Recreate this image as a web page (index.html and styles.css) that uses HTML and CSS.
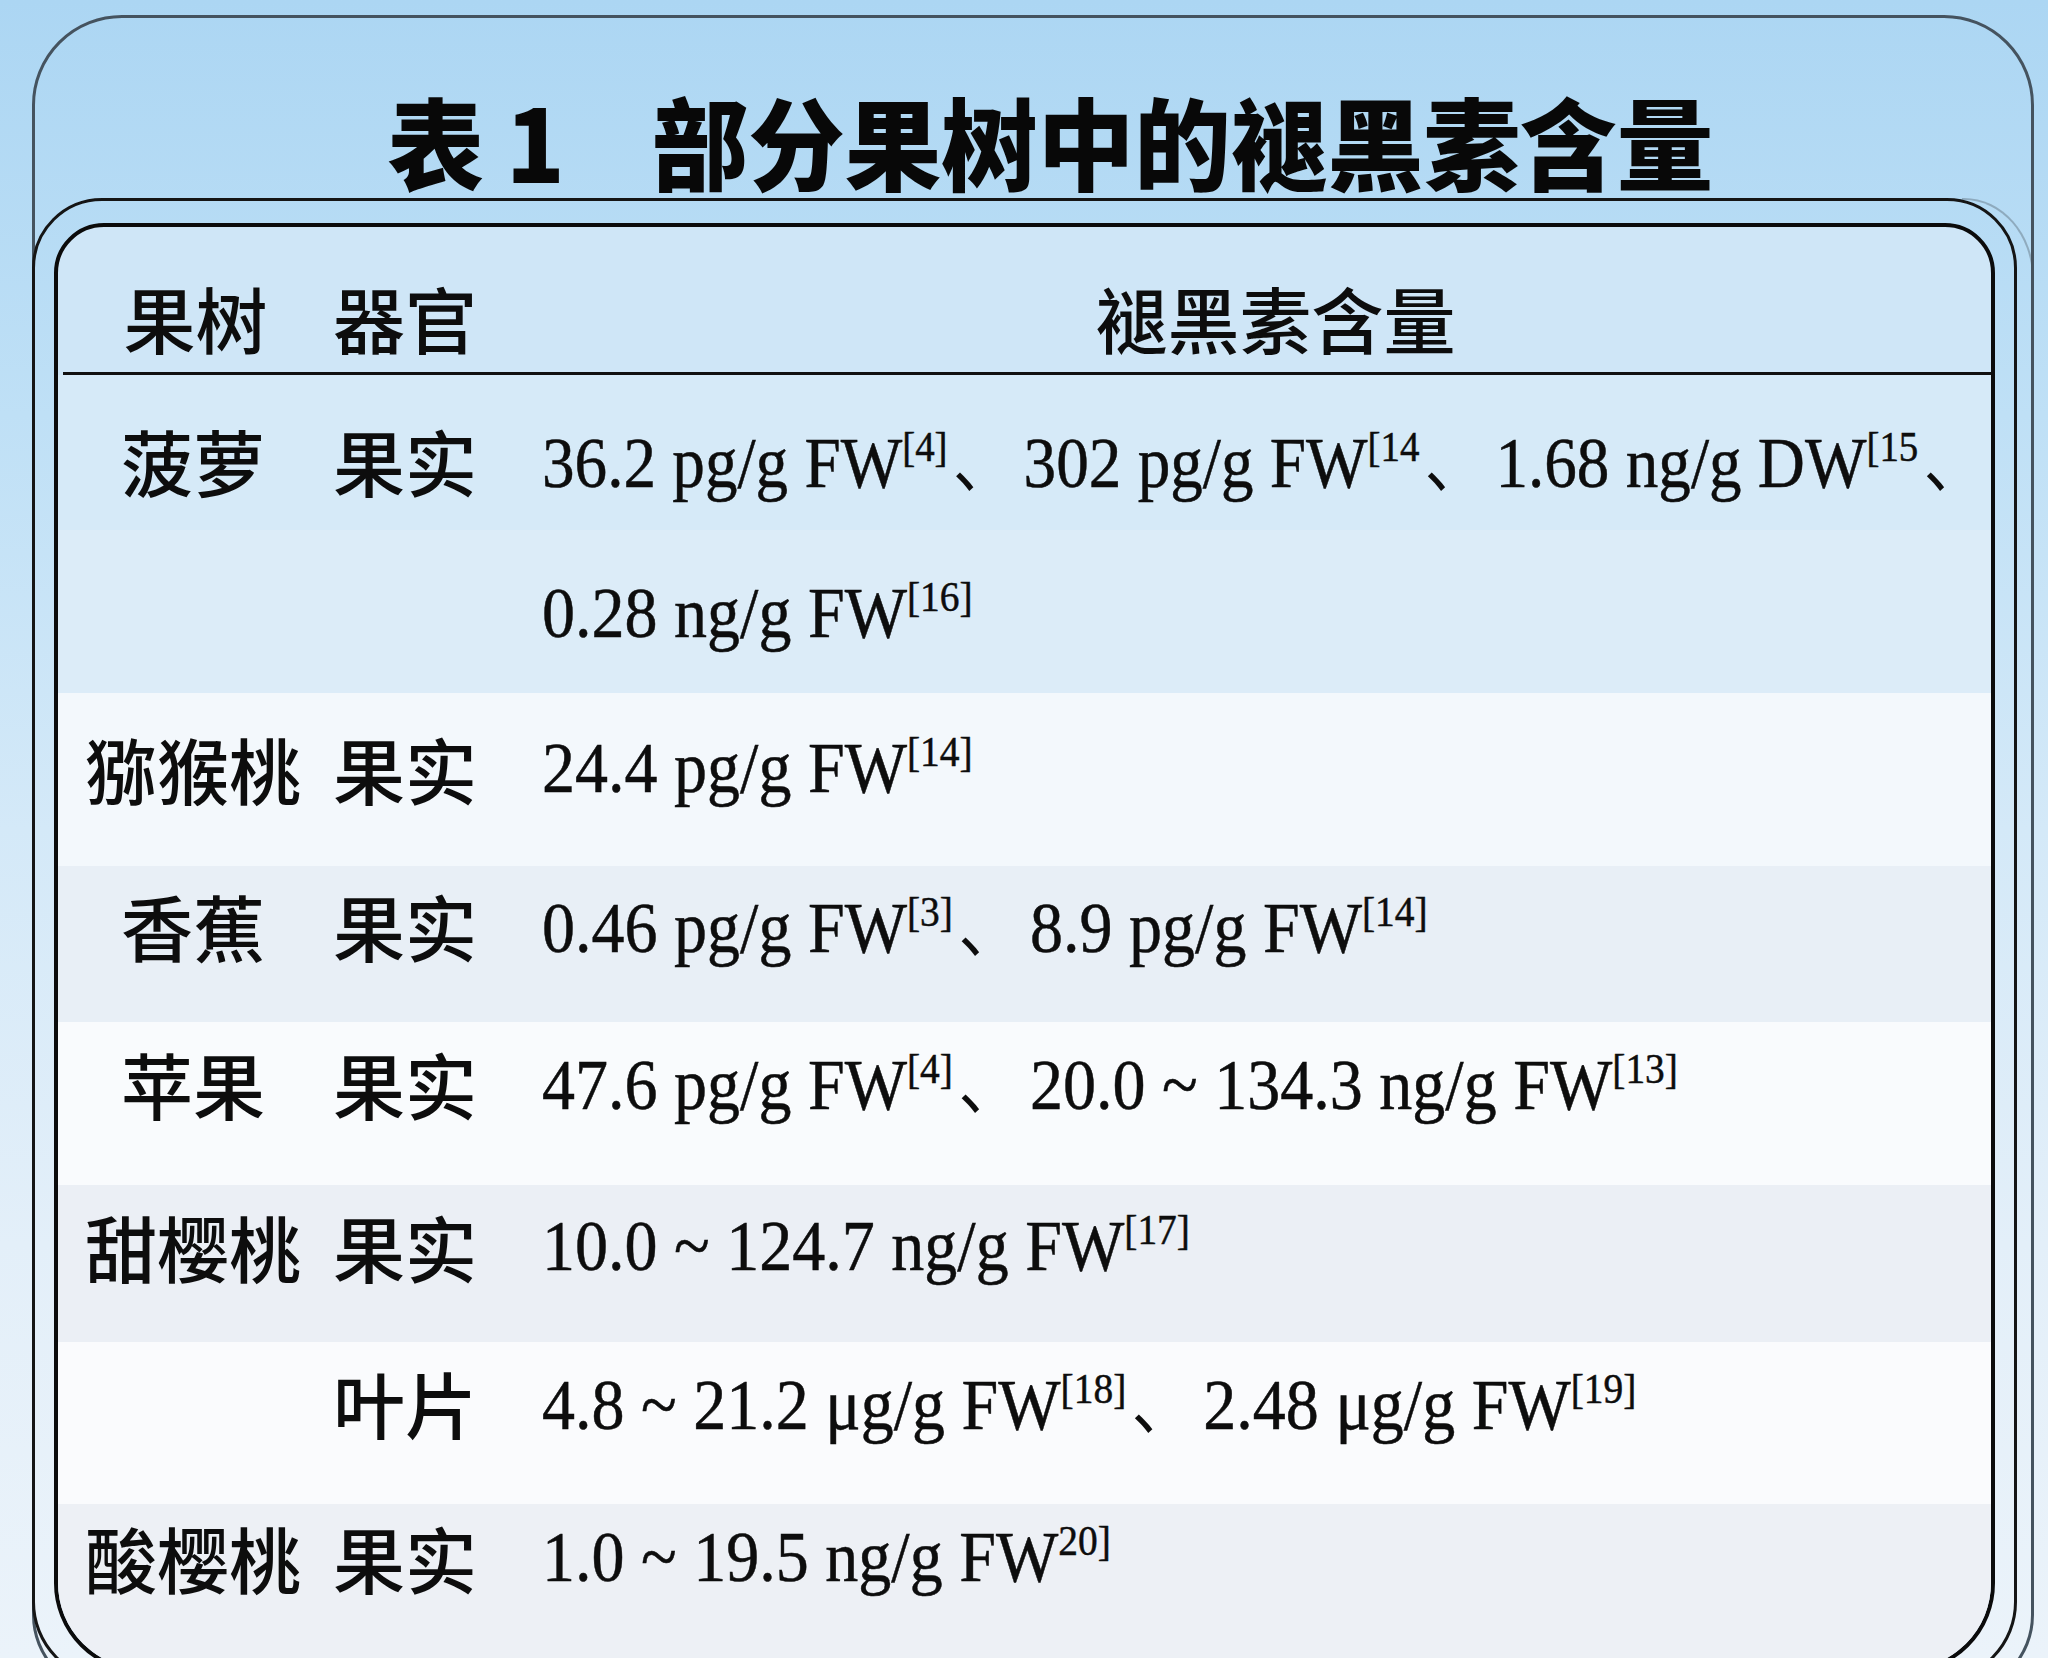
FILE: index.html
```html
<!DOCTYPE html>
<html lang="zh-CN">
<head>
<meta charset="utf-8">
<title>表1 部分果树中的褪黑素含量</title>
<link rel="stylesheet" href="styles.css">
</head>
<body>
<div class="outer">
  <h1 class="title"><span>表 1</span><span class="tsep"></span><span>部分果树中的褪黑素含量</span></h1>
  <div class="middle">
    <div class="inner">
      <div class="thead">
        <div class="c1">果树</div>
        <div class="c2">器官</div>
        <div class="hc">褪黑素含量</div>
      </div>
      <div class="row r1">
        <div class="c1">菠萝</div>
        <div class="c2">果实</div>
        <div class="c3"><span class="val">36.2 pg/g FW<sup>[4]</sup><span class="dun">、</span>302 pg/g FW<sup>[14</sup><span class="dun">、</span>1.68 ng/g DW<sup>[15</sup><span class="dun end">、</span></span></div>
      </div>
      <div class="row r2">
        <div class="c1"></div>
        <div class="c2"></div>
        <div class="c3"><span class="val">0.28 ng/g FW<sup>[16]</sup></span></div>
      </div>
      <div class="row r3">
        <div class="c1">猕猴桃</div>
        <div class="c2">果实</div>
        <div class="c3"><span class="val">24.4 pg/g FW<sup>[14]</sup></span></div>
      </div>
      <div class="row r4">
        <div class="c1">香蕉</div>
        <div class="c2">果实</div>
        <div class="c3"><span class="val">0.46 pg/g FW<sup>[3]</sup><span class="dun">、</span>8.9 pg/g FW<sup>[14]</sup></span></div>
      </div>
      <div class="row r5">
        <div class="c1">苹果</div>
        <div class="c2">果实</div>
        <div class="c3"><span class="val">47.6 pg/g FW<sup>[4]</sup><span class="dun">、</span>20.0 ~ 134.3 ng/g FW<sup>[13]</sup></span></div>
      </div>
      <div class="row r6">
        <div class="c1">甜樱桃</div>
        <div class="c2">果实</div>
        <div class="c3"><span class="val">10.0 ~ 124.7 ng/g FW<sup>[17]</sup></span></div>
      </div>
      <div class="row r7">
        <div class="c1"></div>
        <div class="c2">叶片</div>
        <div class="c3"><span class="val">4.8 ~ 21.2 μg/g FW<sup>[18]</sup><span class="dun">、</span>2.48 μg/g FW<sup>[19]</sup></span></div>
      </div>
      <div class="row r8">
        <div class="c1">酸樱桃</div>
        <div class="c2">果实</div>
        <div class="c3"><span class="val">1.0 ~ 19.5 ng/g FW<sup>20]</sup></span></div>
      </div>
    </div>
  </div>
</div>
</body>
</html>
```
FILE: styles.css
```css
* { box-sizing: border-box; }
html, body { margin: 0; padding: 0; }
body {
  width: 2048px;
  height: 1658px;
  overflow: hidden;
  background: linear-gradient(180deg, #acd6f3 0%, #bfe0f6 25%, #d4e9f8 50%, #e3eff9 75%, #ebf3fa 100%);
  font-family: "Noto Sans CJK SC", sans-serif;
  color: #0d0d0d;
}
.outer {
  margin: 15px 14px 0 32px;
  height: 1680px;
  border: 3px solid #45535f;
  border-radius: 90px 90px 80px 80px;
}
.title {
  margin: 0;
  height: 180px;
  padding: 72px 0 0 36px;
  font-size: 100px;
  line-height: 100px;
  font-weight: 900;
  letter-spacing: 0;
  text-align: center;
  white-space: nowrap;
  color: #080808;
  transform: scaleX(0.965);
}
.tsep { display: inline-block; width: 90px; }
.middle {
  position: relative;
  margin: 0 14px 0 -3px;
  height: 1484px;
  border: 3px solid #151515;
  border-radius: 70px 70px 80px 80px;
  padding: 22px 19px 0 19px;
}
.middle::after {
  content: "";
  position: absolute;
  top: -3px;
  right: -20px;
  width: 70px;
  height: 80px;
  border-top: 2px solid rgba(70, 80, 90, 0.35);
  border-right: 2px solid rgba(70, 80, 90, 0.35);
  border-top-right-radius: 70px 80px;
}
.inner {
  height: 1450px;
  border: 4px solid #0b0b0b;
  border-radius: 50px 50px 90px 90px;
  overflow: hidden;
  background: #cfe6f7;
}
.thead {
  display: grid;
  grid-template-columns: 265px 154px 1fr;
  align-items: center;
  height: 148px;
  margin-left: 5px;
  padding-top: 34px;
  border-bottom: 3px solid #111;
}
.row {
  display: grid;
  grid-template-columns: 270px 154px 1fr;
  align-items: center;
}
.c1, .c2, .hc {
  text-align: center;
  font-size: 72px;
  line-height: 80px;
  font-weight: 500;
  white-space: nowrap;
}
.hc { padding-left: 78px; }
.c3 {
  min-width: 0;
  padding-left: 60px;
  font-family: "Liberation Serif", "Noto Sans CJK SC", serif;
  font-size: 72px;
  line-height: 80px;
  white-space: nowrap;
  -webkit-text-stroke: 0.5px #0d0d0d;
}
.val {
  display: inline-block;
  transform: scaleX(0.917);
  transform-origin: 0 50%;
}
.r1 .val { transform: scaleX(0.905); }
.dun {
  font-family: "Noto Sans CJK SC", sans-serif;
  font-size: 66px;
  padding: 0 12px 0 6px;
  -webkit-text-stroke: 0;
}
.dun.end { padding-right: 0; }
sup {
  font-size: 43px;
  line-height: 0;
  vertical-align: 26px;
}
.r1 { height: 155px; padding-top: 15px; background: #d6eaf8; }
.r2 { height: 163px; padding-top: 2px; background: #dcecf8; }
.r3 { height: 173px; padding-bottom: 24px; background: #f3f8fc; }
.r4 { height: 156px; padding-bottom: 38px; background: #e8eff6; }
.r5 { height: 163px; padding-bottom: 42px; background: #f9fbfd; }
.r6 { height: 157px; padding-bottom: 36px; background: #ebeff5; }
.r7 { height: 162px; padding-bottom: 42px; background: #fafbfd; }
.r8 { height: 180px; padding-bottom: 74px; background: #edf0f5; }
```
